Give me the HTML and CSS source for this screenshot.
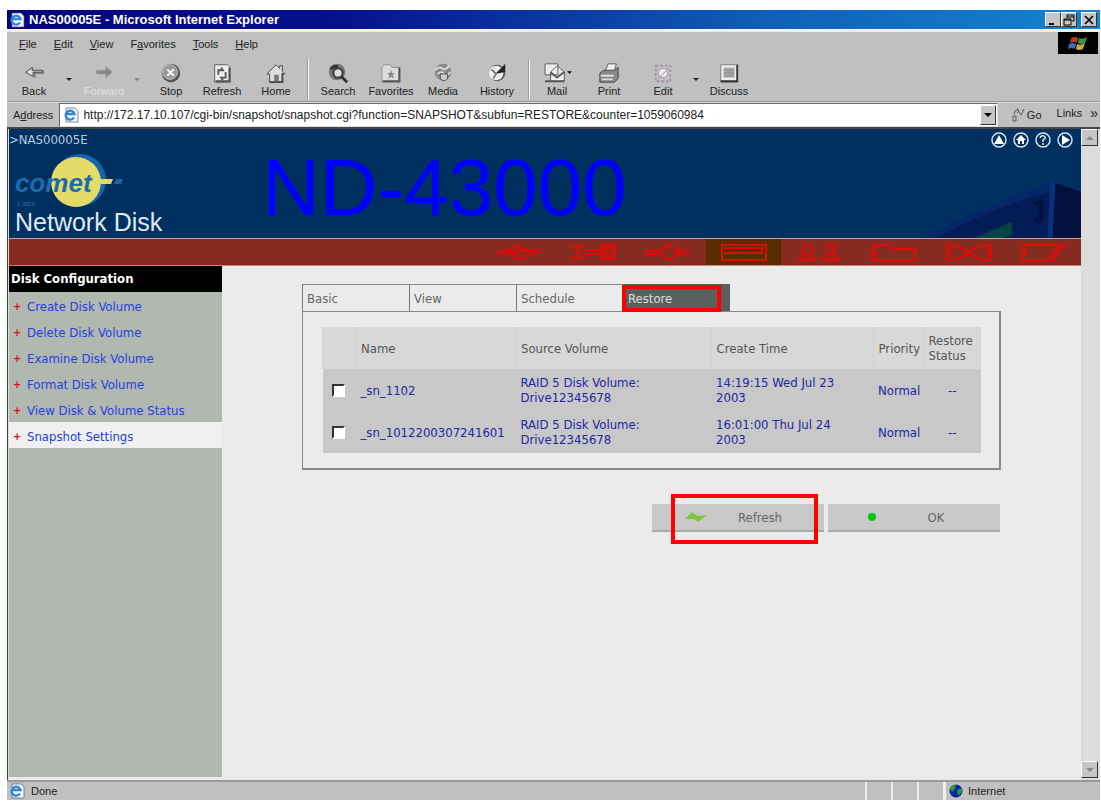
FILE: index.html
```html
<!DOCTYPE html>
<html lang="en">
<head>
<meta charset="utf-8">
<title>NAS00005E - Microsoft Internet Explorer</title>
<link rel="stylesheet" href="styles.css">
</head>
<body>
<svg class="defs" width="0" height="0" aria-hidden="true">
  <symbol id="ie" viewBox="0 0 16 16"><path d="M3 1h9l3 3v11H3z" fill="#f4f8ff" stroke="#557" stroke-width=".7"/><path d="M11 10.500A4.500 4.500 0 1 1 11.500 7H4" fill="none" stroke="#2a86d8" stroke-width="2.400"/></symbol>
</svg>
<div class="window">
  <header class="titlebar">
    <svg class="i16"><use href="#ie"/></svg>
    <span class="title">NAS00005E - Microsoft Internet Explorer</span>
    <button class="winbtn" aria-label="Minimize"><svg viewBox="0 0 12 12"><path d="M2 9h5v2H2z"/></svg></button>
    <button class="winbtn" aria-label="Restore"><svg viewBox="0 0 12 12"><path d="M4 1h7v6H9M4 3h7M4 1v3M1 5h7v6H1zM1 6h7" fill="none" stroke="#000"/></svg></button>
    <button class="winbtn close" aria-label="Close"><svg viewBox="0 0 12 12"><path d="M2 2l8 8M10 2l-8 8" stroke="#000" stroke-width="1.600"/></svg></button>
  </header>
  <nav class="menubar">
    <button><u>F</u>ile</button><button><u>E</u>dit</button><button><u>V</u>iew</button><button>F<u>a</u>vorites</button><button><u>T</u>ools</button><button><u>H</u>elp</button>
    <svg class="flag" viewBox="0 0 40 22"><path d="M13 6q4-2 7 0l-1 5q-3-2-7 0z" fill="#b53b22"/><path d="M21 6q4 2 8-1l-2 6q-4 2-7 0z" fill="#2f9a48"/><path d="M11 12q4-2 7 0l-1 5q-3-2-7 0z" fill="#3b6cc0"/><path d="M19 12q4 2 8-1l-2 6q-4 2-7 0z" fill="#c9a83a"/></svg>
  </nav>
  <div class="toolbar">
    <button class="tool w54"><svg viewBox="0 0 24 24"><path d="M3 11l8-6v4h12v4H14v5z" fill="#888"/><path d="M3 11l7-5v3h11v2H11v5z" fill="#ddd" stroke="#444"/></svg>Back</button>
    <span class="drop w16"></span>
    <button class="tool w54 off" disabled><svg viewBox="0 0 24 24"><path d="M21 11l-7-6v4H4v4h10v4z" fill="#888" stroke="#999"/></svg>Forward</button>
    <span class="drop w12 off"></span>
    <button class="tool w56"><svg viewBox="0 0 24 24"><circle cx="12" cy="12" r="10" fill="#555"/><circle cx="11" cy="11" r="8" fill="#999" stroke="#ccc"/><path d="M8 8l7 7M15 8l-7 7" stroke="#fff" stroke-width="2"/></svg>Stop</button>
    <button class="tool w46"><svg viewBox="0 0 24 24"><path d="M4 3h14l3 3v16H4z" fill="#eee" stroke="#555"/><path d="M20 6v15H5" fill="none" stroke="#555" stroke-width="2"/><path d="M8 14V9h5l-2-3M16 11v6h-5l2 3" fill="none" stroke="#555" stroke-width="2"/></svg>Refresh</button>
    <button class="tool w62"><svg viewBox="0 0 24 24"><path d="M2 13L12 3l4 4V4h3v6l3 3h-3v9H5v-9z" fill="#ddd" stroke="#444"/><path d="M10 14h5v7h-5z" fill="#777"/><path d="M19 12v10H5" fill="none" stroke="#444" stroke-width="2"/></svg>Home</button>
    <span class="sep"></span>
    <button class="tool w58"><svg viewBox="0 0 24 24"><circle cx="11" cy="11" r="9" fill="#777"/><circle cx="12" cy="12" r="5" fill="#ddd" stroke="#333" stroke-width="2"/><path d="M4 8q3-4 8-3M16 16l6 6" fill="none" stroke="#333" stroke-width="3"/></svg>Search</button>
    <button class="tool w48"><svg viewBox="0 0 24 24"><path d="M2 6l3-3h6l2 3h9v16H2z" fill="#ddd" stroke="#888"/><path d="M21 6v15H3" fill="none" stroke="#555" stroke-width="2"/><path d="M12 8l1 4h4l-3 2 1 4-3-2-3 2 1-4-3-2h4z" fill="#888"/></svg>Favorites</button>
    <button class="tool w56"><svg viewBox="0 0 24 24"><circle cx="12" cy="11" r="9" fill="#888"/><path d="M3 9q5-5 8-2t8-3M6 13q5-4 7 0t7-2" fill="none" stroke="#ddd" stroke-width="2"/><path d="M9 13h8v5q-4 5-8 0z" fill="#ccc" stroke="#444"/></svg>Media</button>
    <button class="tool w52"><svg viewBox="0 0 24 24"><circle cx="12" cy="12" r="9" fill="#555"/><circle cx="11" cy="12" r="8" fill="#eee"/><path d="M10 13L21 2v9z" fill="#222"/><path d="M6 8l5 5-3 5" fill="none" stroke="#777" stroke-width="2"/></svg>History</button>
    <span class="sep second"></span>
    <button class="tool w54"><svg class="mail" viewBox="0 0 32 24"><path d="M3 2h14v12H3zM9 21V11l7-7 8 7v10z" fill="#eee" stroke="#555"/><path d="M3 21h21M9 11l7 6 8-6" fill="none" stroke="#555" stroke-width="2"/><path d="M27 10h5l-2 3z"/></svg>Mail</button>
    <button class="tool w50"><svg viewBox="0 0 24 24"><path d="M7 12l4-10h9l-3 11z" fill="#eee" stroke="#555"/><path d="M2 12l4-3h12l4-3v12l-4 4H2z" fill="#888" stroke="#444"/><path d="M3 15h14M4 19h12" stroke="#ddd" stroke-width="2"/></svg>Print</button>
    <button class="tool w58"><svg viewBox="0 0 24 24"><path d="M4 4h16v17H4z" fill="#c7bdc9" stroke="#a092a4" stroke-dasharray="3 2" stroke-width="2"/><circle cx="12" cy="12" r="5" fill="#eee" stroke="#a092a4"/><path d="M7 18L18 7" stroke="#888"/></svg>Edit</button>
    <span class="drop w8"></span>
    <button class="tool w58"><svg viewBox="0 0 24 24"><path d="M3 3h18v19H3z" fill="#eee" stroke="#777"/><path d="M6 6h12v11H6z" fill="#aaa"/><path d="M7 9h10M7 12h10M7 15h10" stroke="#888"/><path d="M21 3v18H3" fill="none" stroke="#333" stroke-width="2"/></svg>Discuss</button>
  </div>
  <div class="address">
    <label for="url">A<u>d</u>dress</label>
    <div class="urlbox">
      <svg class="i16"><use href="#ie"/></svg>
      <input id="url" type="text" value="http://172.17.10.107/cgi-bin/snapshot/snapshot.cgi?function=SNAPSHOT&amp;subfun=RESTORE&amp;counter=1059060984">
      <button class="winbtn" aria-label="Show addresses"><svg viewBox="0 0 12 12"><path d="M2 4h8L6 8z"/></svg></button>
    </div>
    <button class="go"><svg viewBox="0 0 14 18"><path d="M2 15v-5h3v5zM3 8q0-4 4-4M6 2l2 3-2 2M8 6l2 3 3-6" fill="none" stroke="#555"/></svg>Go</button>
    <button class="links">Links <span class="more">»</span></button>
  </div>
  <div class="viewport">
    <div class="page">
      <div class="banner">
        <div class="brand">
          <div class="host">&gt;NAS00005E</div>
          <svg class="logo" viewBox="0 0 120 56"><circle cx="65" cy="27" r="26" fill="#1765ac"/><circle cx="61" cy="29" r="25" fill="#e3dc69"/><path d="M82 26h16l-2 5H82z" fill="#e3dc69"/><path d="M101 26h7l-2 5h-7z" fill="#1d64a4"/><text x="0" y="39" class="comet">comet</text><text x="2" y="53" class="labs">Labs</text></svg>
          <div class="product">Network Disk</div>
        </div>
        <h1>ND-43000</h1>
        <svg class="device" viewBox="0 0 157 56"><path d="M0 56Q60 22 129 0L157 10V56z" fill="#052667"/><path d="M12 56Q68 26 124 10l4 46z" fill="#021d55"/><path d="M129 0l28 10v46h-28z" fill="#02103d"/><path d="M129 0l-3 56" fill="none" stroke="#063080" stroke-width="5"/><path d="M50 56L88 40v13l-10 3z" fill="#064343"/><path d="M110 22l7-2v20M110 38h5" fill="none" stroke="#02103d" stroke-width="3"/></svg>
        <div class="quick">
          <a href="#" aria-label="Up"><svg viewBox="0 0 16 16"><circle cx="8" cy="8" r="7"/><path d="M8 3l5 9H3z"/></svg></a>
          <a href="#" aria-label="Home"><svg viewBox="0 0 16 16"><circle cx="8" cy="8" r="7"/><path d="M8 3l5 5h-2v4H9V9H7v3H5V8H3z"/></svg></a>
          <a href="#" aria-label="Help"><svg viewBox="0 0 16 16"><circle cx="8" cy="8" r="7"/><path class="stroke" d="M5 6q1-3 4-2 3 2-1 4v2M7 12h2"/></svg></a>
          <a href="#" aria-label="Next"><svg viewBox="0 0 16 16"><circle cx="8" cy="8" r="7"/><path d="M5 3l8 5-8 5z"/></svg></a>
        </div>
      </div>
      <nav class="sections">
        <a href="#" aria-label="Quick setup"><svg viewBox="0 0 48 20"><path d="M2 11l16-5 6-3 2 4 20 2-12 3-8 4-6 1 1-5zM12 10l20-1" /></svg></a>
        <a href="#" aria-label="Server"><svg viewBox="0 0 48 20"><path d="M2 4h10l5 4h13M2 16h10l5-4h13M2 4l6 3v5l-6 4M31 3h14v14H31zM34 6h8v8h-8zM30 10h8"/></svg></a>
        <a href="#" aria-label="Network"><svg viewBox="0 0 48 20"><path d="M2 9h12v3H2zM17 8l7-6 8 6-2 6-6 4-6-4zM34 8l11 2-11 3z"/></svg></a>
        <a href="#" class="current" aria-label="Disk"><svg viewBox="0 0 48 20"><path d="M2 3h44v15H2zM4 6h40M4 11h38V6" stroke-width="2"/></svg></a>
        <a href="#" aria-label="Users"><svg viewBox="0 0 48 20"><circle cx="12" cy="7" r="5"/><path d="M4 17l5-5h6l5 5zM6 18h12"/><circle cx="36" cy="7" r="5"/><path d="M28 17l5-5h6l5 5zM30 18h12M36 4l3 4"/></svg></a>
        <a href="#" aria-label="Folders"><svg viewBox="0 0 48 20"><path d="M2 7l4-4h13l4 4h22v11H2zM5 8v8"/></svg></a>
        <a href="#" aria-label="Backup"><svg viewBox="0 0 48 20"><path d="M2 3h7l15 6 14-6h8v15h-8L24 12 8 18H2zM5 6v9M43 6v9M20 8l8 5M28 7l-9 6"/></svg></a>
        <a href="#" aria-label="Logs"><svg viewBox="0 0 48 20"><path d="M2 3h43l-9 10-5 2 1-4 7-6M2 3v15h32v-4M5 6v8"/></svg></a>
      </nav>
      <div class="body">
        <aside class="side">
          <h2>Disk Configuration</h2>
          <ul>
            <li><a href="#">Create Disk Volume</a></li>
            <li><a href="#">Delete Disk Volume</a></li>
            <li><a href="#">Examine Disk Volume</a></li>
            <li><a href="#">Format Disk Volume</a></li>
            <li><a href="#">View Disk &amp; Volume Status</a></li>
            <li class="current"><a href="#">Snapshot Settings</a></li>
          </ul>
        </aside>
        <main>
          <div class="tabs">
            <button>Basic</button><button>View</button><button>Schedule</button><button class="current">Restore<span class="mark"></span></button>
          </div>
          <div class="panel">
            <table>
              <colgroup><col class="c1"><col class="c2"><col class="c3"><col class="c4"><col class="c5"><col class="c6"></colgroup>
              <thead><tr><th></th><th>Name</th><th>Source Volume</th><th>Create Time</th><th>Priority</th><th>Restore<br>Status</th></tr></thead>
              <tbody>
                <tr><td><input type="checkbox" id="s1"></td><td><label for="s1">_sn_1102</label></td><td>RAID 5 Disk Volume:<br>Drive12345678</td><td>14:19:15 Wed Jul 23<br>2003</td><td>Normal</td><td class="none">--</td></tr>
                <tr><td><input type="checkbox" id="s2"></td><td><label for="s2">_sn_1012200307241601</label></td><td>RAID 5 Disk Volume:<br>Drive12345678</td><td>16:01:00 Thu Jul 24<br>2003</td><td>Normal</td><td class="none">--</td></tr>
              </tbody>
            </table>
          </div>
          <div class="actions">
            <button><svg viewBox="0 0 22 12"><path d="M0 8l7-7 5 4 10-1-9 7-4-3z" fill="#7cc83c"/></svg><span>Refresh</span><span class="mark"></span></button>
            <button><svg viewBox="0 0 22 12"><circle cx="11" cy="6" r="4" fill="#0c1"/></svg><span>OK</span></button>
          </div>
        </main>
      </div>
    </div>
    <div class="scroll">
      <button class="winbtn" aria-label="Scroll up"><svg viewBox="0 0 12 12"><path d="M2 8h8L6 4z" fill="#888"/></svg></button>
      <button class="winbtn" aria-label="Scroll down"><svg viewBox="0 0 12 12"><path d="M2 4h8L6 8z" fill="#888"/></svg></button>
    </div>
  </div>
  <footer class="status">
    <svg class="i16"><use href="#ie"/></svg>
    <span class="msg">Done</span>
    <span class="cell"></span><span class="cell"></span><span class="cell"></span>
    <span class="zone"><svg class="i14" viewBox="0 0 14 14"><circle cx="7" cy="7" r="6.500" fill="#0a1fa8"/><path d="M1 5q2-4 6-4l-1 4-3 3zM8 6l5-2v4l-4 4z" fill="#2a9a30"/></svg>Internet</span>
  </footer>
</div>
</body>
</html>
```
FILE: styles.css
```css
* { box-sizing: border-box; }
body {
  margin: 0;
  background: #fff;
  font-family: "Liberation Sans", Arial, sans-serif;
  font-size: 11px;
  color: #222;
}
button { font: inherit; color: inherit; border: 0; background: none; padding: 0; margin: 0; }
a { text-decoration: none; }
.defs { position: absolute; }
.window { min-height: 100vh; padding: 10px 1px 1px 7px; display: flex; flex-direction: column; }
.i16 { width: 16px; height: 16px; flex: none; }
.i14 { width: 14px; height: 14px; flex: none; }

.titlebar {
  height: 19px;
  display: flex;
  align-items: center;
  padding: 0 3px 0 2px;
  background: linear-gradient(90deg, #04047c 0, #06108c 30%, #0f60b8 70%, #1284d0 100%);
  color: #fff;
}
.title { flex: 1; padding-left: 4px; font-size: 13px; font-weight: bold; }
.winbtn {
  width: 16px;
  height: 15px;
  flex: none;
  display: flex;
  align-items: center;
  justify-content: center;
  background: #c6c6c6;
  border: 1px solid;
  border-color: #fff #333 #333 #fff;
}
.winbtn svg { width: 12px; height: 12px; }
.winbtn.close { margin-left: 4px; }

.menubar {
  height: 26px;
  display: flex;
  align-items: center;
  gap: 17px;
  margin-top: 1px;
  padding: 0 2px 0 12px;
  background: #c0c0c0;
  border-top: 2px solid #eee;
}
.flag { width: 40px; height: 22px; margin-left: auto; background: #000; align-self: flex-start; }

.toolbar {
  height: 46px;
  display: flex;
  align-items: flex-end;
  background: #c0c0c0;
  border-bottom: 1px solid #999;
}
.tool { display: flex; flex: none; flex-direction: column; align-items: center; gap: 1px; padding-bottom: 3px; line-height: 13px; }
.tool svg { width: 22px; height: 22px; }
.tool svg.mail { width: 32px; }
.tool.off { color: #e2e2e2; }
.w8 { width: 8px; }
.w12 { width: 12px; }
.w16 { width: 16px; }
.w46 { width: 46px; }
.w48 { width: 48px; }
.w50 { width: 50px; }
.w52 { width: 52px; }
.w54 { width: 54px; }
.w56 { width: 56px; }
.w58 { width: 58px; }
.w62 { width: 62px; }
.drop { display: flex; flex: none; justify-content: center; padding-bottom: 20px; }
.drop::before { content: ""; border: 3px solid transparent; border-top-color: #222; border-bottom: 0; }
.drop.off::before { border-top-color: #888; }
.sep { width: 2px; height: 40px; margin-bottom: 2px; border-left: 1px solid #999; border-right: 1px solid #fff; }
.sep.second { margin-left: 5px; }

.address {
  height: 25px;
  display: flex;
  align-items: center;
  background: #c0c0c0;
  border-top: 1px solid #ddd;
  padding: 0 2px 0 6px;
}
.urlbox {
  flex: 1;
  height: 24px;
  display: flex;
  align-items: center;
  margin-left: 6px;
  padding: 0 1px 0 3px;
  background: #fff;
  border: 1px solid;
  border-color: #666 #ddd #ddd #666;
}
.urlbox input { flex: 1; min-width: 0; border: 0; outline: 0; padding: 0 0 0 4px; font: 12px "Liberation Sans", Arial, sans-serif; color: #222; background: none; }
.urlbox .winbtn { height: 20px; }
.go { display: flex; align-items: center; gap: 2px; margin-left: 13px; }
.go svg { width: 14px; height: 18px; }
.links { display: flex; gap: 8px; margin-left: 15px; }
.more { padding-bottom: 4px; font-size: 14px; line-height: 12px; }

.viewport { flex: 1; display: flex; padding: 0 2px 0 1px; border-top: 2px solid #444; background: #ddd; border-left: 1px solid #444; }
.page { flex: 1; min-width: 0; display: flex; flex-direction: column; background: #ebebeb; font-family: "DejaVu Sans Condensed", "DejaVu Sans", sans-serif; font-size: 13px; }
.scroll { width: 17px; display: flex; flex-direction: column; justify-content: space-between; background: #dcdcdc; padding-bottom: 2px; }
.scroll .winbtn { width: 17px; height: 17px; }

.banner { position: relative; height: 109px; display: flex; background: #00305f; }
.brand { width: 253px; flex: none; display: flex; flex-direction: column; color: #dfeaf5; }
.host { padding: 4px 0 0; line-height: 14px; color: #b9cde0; }
.logo { width: 120px; height: 56px; margin: 6px 0 0 6px; overflow: visible; }
.comet { font: italic bold 26px "Liberation Sans", Arial, sans-serif; fill: #1d6aac; }
.labs { font: italic bold 8px "Liberation Sans", Arial, sans-serif; fill: #1b5590; }
.product { padding-left: 6px; font: 25px/26px "Liberation Sans", Arial, sans-serif; }
.banner h1 { margin: 0; padding-top: 9px; font: 80px/100px "Liberation Sans Narrow", "Liberation Sans", Arial, sans-serif; color: #00f; }
.device { position: absolute; right: 0; bottom: 0; width: 157px; height: 56px; }
.quick { position: absolute; right: 8px; top: 3px; display: flex; gap: 6px; }
.quick svg { display: block; width: 16px; height: 16px; fill: #fff; }
.quick circle, .quick .stroke { fill: none; stroke: #d5e2f0; stroke-width: 1.500px; }

.sections { height: 28px; display: flex; justify-content: flex-end; background: #862b20; border-top: 1px solid #c9a29c; border-bottom: 1px solid #c9837b; }
.sections a { width: 75px; display: flex; align-items: center; justify-content: center; }
.sections a.current { background: #5a2d00; }
.sections svg { width: 48px; height: 20px; fill: none; stroke: #e00a08; stroke-width: 2px; }

.body { flex: 1; display: flex; }
.side { width: 213px; flex: none; background: #b0b8b0; margin-bottom: 3px; }
.side h2 { margin: 0; padding-left: 2px; background: #000; color: #fff; font-size: 13px; line-height: 26px; font-weight: bold; }
.side ul { list-style: none; margin: 0; padding: 0; }
.side li { height: 26px; display: flex; align-items: center; padding: 2px 0 0 4px; }
.side li::before { content: "+"; width: 14px; color: #d11; font-size: 11px; font-weight: bold; }
.side li.current { background: #f0f0f0; }
.side a { color: #2540e0; }

main { flex: 1; min-width: 0; padding: 18px 80px 0; color: #666; }
.tabs { display: flex; }
.tabs button { position: relative; width: 107px; height: 27px; padding: 0 0 0 4px; text-align: left; border-left: 1px solid #777; border-top: 1px solid #888; }
.tabs button.current { background: #5c605d; color: #ddd; border-color: #5c605d; }
.mark { position: absolute; border: 4px solid #f00; pointer-events: none; }
.tabs .mark { inset: 0 9px -1px -2px; }
.panel { border: 2px solid #888; border-width: 1px 2px 2px 1px; padding: 15px 18px 15px 19px; }
table { width: 100%; table-layout: fixed; border-collapse: collapse; line-height: 15px; }
.c1 { width: 33px; }
.c2 { width: 160px; }
.c4 { width: 162px; }
.c5 { width: 50px; }
.c6 { width: 58px; }
th { height: 42px; background: #d8d8d8; color: #555; font-weight: normal; text-align: left; padding: 0 0 0 5px; border-left: 1px solid #d0d0d0; white-space: nowrap; }
td { height: 42px; background: #c8c8c8; color: #2424a4; padding: 0 0 0 5px; white-space: nowrap; }
td.none { padding-left: 25px; }
td input { appearance: none; display: block; width: 13px; height: 13px; margin: 0 0 0 4px; background: #fff; border: 2px solid; border-color: #333 #fff #fff #333; }
.actions { display: flex; justify-content: flex-end; gap: 4px; margin-top: 34px; padding-right: 1px; }
.actions button { position: relative; width: 172px; height: 28px; display: flex; align-items: center; background: #c8c8c8; border-bottom: 2px solid #aaa; padding-left: 33px; }
.actions svg { width: 22px; height: 12px; }
.actions span:not(.mark) { flex: 1; text-align: center; padding-right: 11px; }
.actions .mark { inset: -10px 6px -14px 19px; }

.status { height: 20px; display: flex; align-items: center; padding-left: 2px; background: #c0c0c0; border-top: 2px solid #999; }
.msg { flex: 1; padding-left: 6px; }
.cell { width: 26px; height: 100%; border-left: 2px solid #eee; }
.zone { width: 157px; height: 100%; display: flex; align-items: center; gap: 5px; padding-left: 3px; border-left: 3px solid #eee; }
```
